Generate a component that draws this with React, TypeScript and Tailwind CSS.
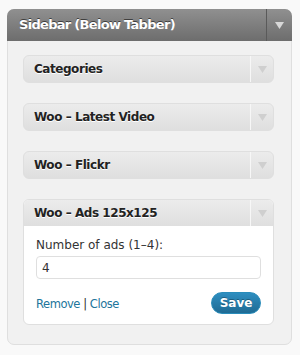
import React from "react";

const font = { fontFamily: '"DejaVu Sans", "Lucida Grande", Verdana, sans-serif' };

function Arrow({ color }: { color: string }) {
  return (
    <svg width="9" height="7" viewBox="0 0 9 7">
      <polygon points="0,0 9,0 4.5,7" fill={color} />
    </svg>
  );
}

function WidgetHead({ title }: { title: string }) {
  return (
    <div className="flex h-[26px] items-stretch">
      <div className="flex flex-1 items-center pl-[10px] text-[12px] font-bold tracking-[-0.45px] text-[#222] [text-shadow:0_1px_0_#fff]">
        {title}
      </div>
      <div className="flex w-[23px] items-center justify-center border-l border-l-[#f7f7f7]">
        <Arrow color="#cfcfcf" />
      </div>
    </div>
  );
}

function Widget({ title }: { title: string }) {
  return (
    <div className="rounded-[6px] border border-[#dfdfdf] bg-gradient-to-b from-[#ececec] to-[#dfdfdf]">
      <WidgetHead title={title} />
    </div>
  );
}

export default function App() {
  return (
    <div className="min-h-[355px] w-[300px] bg-[#f9f9f9] pt-[9px]" style={font}>
      <div className="ml-[7px] w-[285px] rounded-[7px] border border-[#dfdfdf] bg-[#f1f1f1] pb-[19px]">
        <div className="-m-px flex h-[32px] items-stretch rounded-t-[7px] bg-gradient-to-b from-[#909090] to-[#6d6d6d]">
          <div className="flex flex-1 items-center pl-[12px] text-[13px] font-bold tracking-[-0.7px] text-white [text-shadow:0_-1px_0_#3f3f3f]">
            Sidebar (Below Tabber)
          </div>
          <div className="flex w-[26px] items-center justify-center border-l border-l-[#5a5a5a]">
            <Arrow color="#d8d8d8" />
          </div>
        </div>
        <div className="flex flex-col gap-[20px] pl-[15px] pr-[17px] pt-[15px]">
          <Widget title="Categories" />
          <Widget title="Woo – Latest Video" />
          <Widget title="Woo – Flickr" />
          <div className="overflow-hidden rounded-[6px] border border-[#dfdfdf] bg-white">
            <div className="bg-gradient-to-b from-[#ececec] to-[#dfdfdf]">
              <WidgetHead title="Woo – Ads 125x125" />
            </div>
            <div className="px-[12px] pb-[10px] pt-[11px]">
              <div className="text-[12px] leading-[16px] text-[#333]">Number of ads (1–4):</div>
              <input
                readOnly
                value="4"
                className="mt-[3px] h-[23px] w-full rounded-[4px] border border-[#dfdfdf] bg-white px-[5px] text-[12px] text-[#333] outline-none"
                style={font}
              />
              <div className="mt-[13px] flex items-center justify-between">
                <div className="pt-[3px] text-[11.5px] tracking-[-0.45px] text-[#21759b]">
                  <span>Remove</span>
                  <span className="text-[#333]"> | </span>
                  <span>Close</span>
                </div>
                <button
                  className="h-[22px] w-[50px] rounded-full border border-[#298cba] bg-gradient-to-b from-[#2e8ec0] to-[#1f6b94] text-[12px] font-bold text-white [text-shadow:0_-1px_0_rgba(0,0,0,0.3)]"
                  style={font}
                >
                  Save
                </button>
              </div>
            </div>
          </div>
        </div>
      </div>
    </div>
  );
}
